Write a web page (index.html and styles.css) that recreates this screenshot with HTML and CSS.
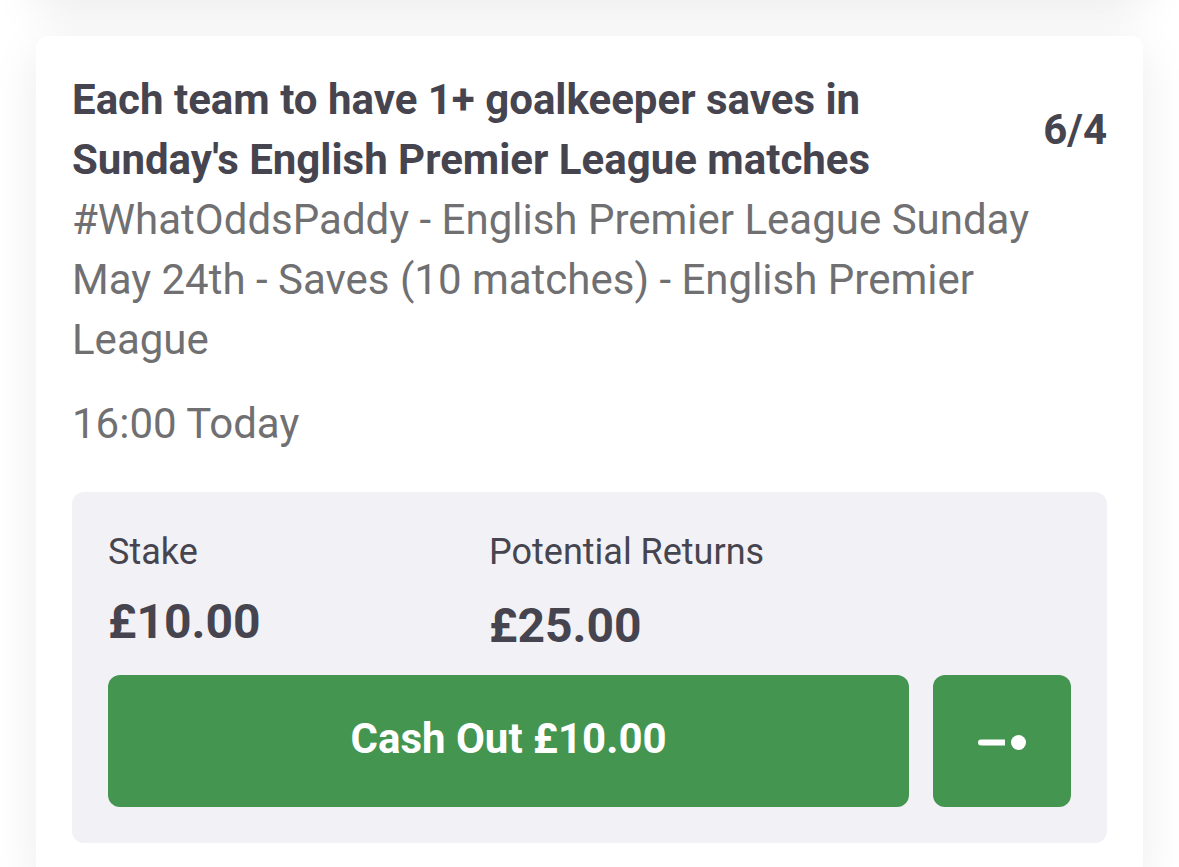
FILE: index.html
```html
<!DOCTYPE html>
<html lang="en">
<head>
<meta charset="utf-8">
<meta name="viewport" content="width=device-width, initial-scale=1">
<title>My Bets</title>
<link rel="stylesheet" href="styles.css">
</head>
<body>
<main class="bets">
  <div class="card card-previous"></div>
  <article class="card">
    <header class="selection">
      <h1 class="title">Each team to have 1+ goalkeeper saves in Sunday's English Premier League matches</h1>
      <span class="odds">6/4</span>
    </header>
    <p class="market">#WhatOddsPaddy - English Premier League Sunday May 24th - Saves (10 matches) - English Premier League</p>
    <p class="time">16:00 Today</p>
    <section class="summary">
      <dl class="amounts">
        <div class="amount"><dt>Stake</dt><dd>£10.00</dd></div>
        <div class="amount amount-returns"><dt>Potential Returns</dt><dd>£25.00</dd></div>
      </dl>
      <div class="actions">
        <button class="button cash-out" type="button">Cash Out £10.00</button>
        <button class="button partial" type="button" aria-label="Partial cash out">
          <svg class="slider-icon" viewBox="0 0 48 20" aria-hidden="true"><path d="M3 8.5H27V14.500H3A3 3 0 0 1 3 8.500Z" fill="#fff"/><circle cx="40.500" cy="11.500" r="7.500" fill="#fff"/></svg>
        </button>
      </div>
    </section>
  </article>
</main>
</body>
</html>
```
FILE: styles.css
```css
* { box-sizing: border-box; }
body {
  margin: 0;
  background: #fff;
  color: #46454f;
  font-family: Roboto, sans-serif;
  overflow: hidden;
}
h1, p, dl, dd { margin: 0; }
.bets {
  display: flex;
  flex-direction: column;
  gap: 36px;
  padding: 0 36px;
}
.card {
  padding: 34px 36px 36px;
  border-radius: 12px;
  background: #fff;
  box-shadow: 0 12px 48px rgba(0, 0, 0, 0.08);
}
.card-previous {
  height: 240px;
  margin-top: -240px;
  padding: 0;
}
.selection {
  display: flex;
  align-items: center;
  justify-content: space-between;
}
.title {
  max-width: 850px;
  font-size: 42px;
  font-weight: 700;
  line-height: 60px;
}
.odds {
  font-size: 42px;
  font-weight: 700;
  line-height: 60px;
}
.market, .time {
  color: #707072;
  font-size: 42px;
  line-height: 60px;
}
.market { max-width: 980px; }
.time { margin-top: 24px; }
.summary {
  margin-top: 38px;
  padding: 36px;
  border-radius: 12px;
  background: #f2f1f6;
}
.amounts {
  display: grid;
  grid-template-columns: 381px 1fr;
}
.amount dt {
  font-size: 36px;
  line-height: 48px;
}
.amount dd {
  margin-top: 16px;
  font-size: 48px;
  font-weight: 700;
  line-height: 60px;
}
.amount-returns dd { margin-top: 20px; }
.actions {
  display: flex;
  gap: 24px;
  margin-top: 19px;
}
.button {
  height: 132px;
  padding: 0;
  border: 0;
  border-radius: 12px;
  background: #449550;
  color: #fff;
  font: 700 42px/60px Roboto, sans-serif;
}
.cash-out {
  flex: 1;
  padding-bottom: 4px;
}
.partial {
  display: grid;
  place-items: center;
  width: 138px;
}
.slider-icon { width: 48px; height: 20px; }
```
